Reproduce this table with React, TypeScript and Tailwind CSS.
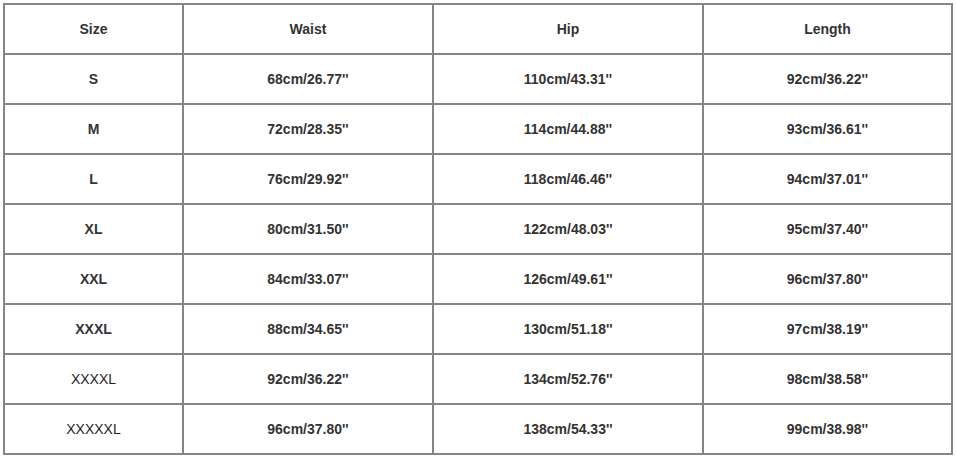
import React from "react";

const rows: [string, string, string, string][] = [
  ["S", "68cm/26.77''", "110cm/43.31''", "92cm/36.22''"],
  ["M", "72cm/28.35''", "114cm/44.88''", "93cm/36.61''"],
  ["L", "76cm/29.92''", "118cm/46.46''", "94cm/37.01''"],
  ["XL", "80cm/31.50''", "122cm/48.03''", "95cm/37.40''"],
  ["XXL", "84cm/33.07''", "126cm/49.61''", "96cm/37.80''"],
  ["XXXL", "88cm/34.65''", "130cm/51.18''", "97cm/38.19''"],
  ["XXXXL", "92cm/36.22''", "134cm/52.76''", "98cm/38.58''"],
  ["XXXXXL", "96cm/37.80''", "138cm/54.33''", "99cm/38.98''"],
];

function Cell({ children, thin }: { children: React.ReactNode; thin?: boolean }) {
  return (
    <div
      className={
        "bg-white h-[48px] flex items-center justify-center text-[14px] " +
        (thin ? "font-normal text-[#1f1f1f]" : "font-bold text-[#333]")
      }
    >
      {children}
    </div>
  );
}

export default function App() {
  return (
    <div className="w-[956px] h-[457px] bg-white pt-[3px] pl-[3px] font-['Liberation_Sans',Arial,sans-serif]">
      <div className="inline-grid grid-cols-[177px_248px_268px_247px] gap-[2px] p-[2px] bg-[#858585]">
        <Cell>Size</Cell>
        <Cell>Waist</Cell>
        <Cell>Hip</Cell>
        <Cell>Length</Cell>
        {rows.map((r) => (
          <React.Fragment key={r[0]}>
            <Cell thin={r[0].length > 4}>{r[0]}</Cell>
            <Cell>{r[1]}</Cell>
            <Cell>{r[2]}</Cell>
            <Cell>{r[3]}</Cell>
          </React.Fragment>
        ))}
      </div>
    </div>
  );
}
